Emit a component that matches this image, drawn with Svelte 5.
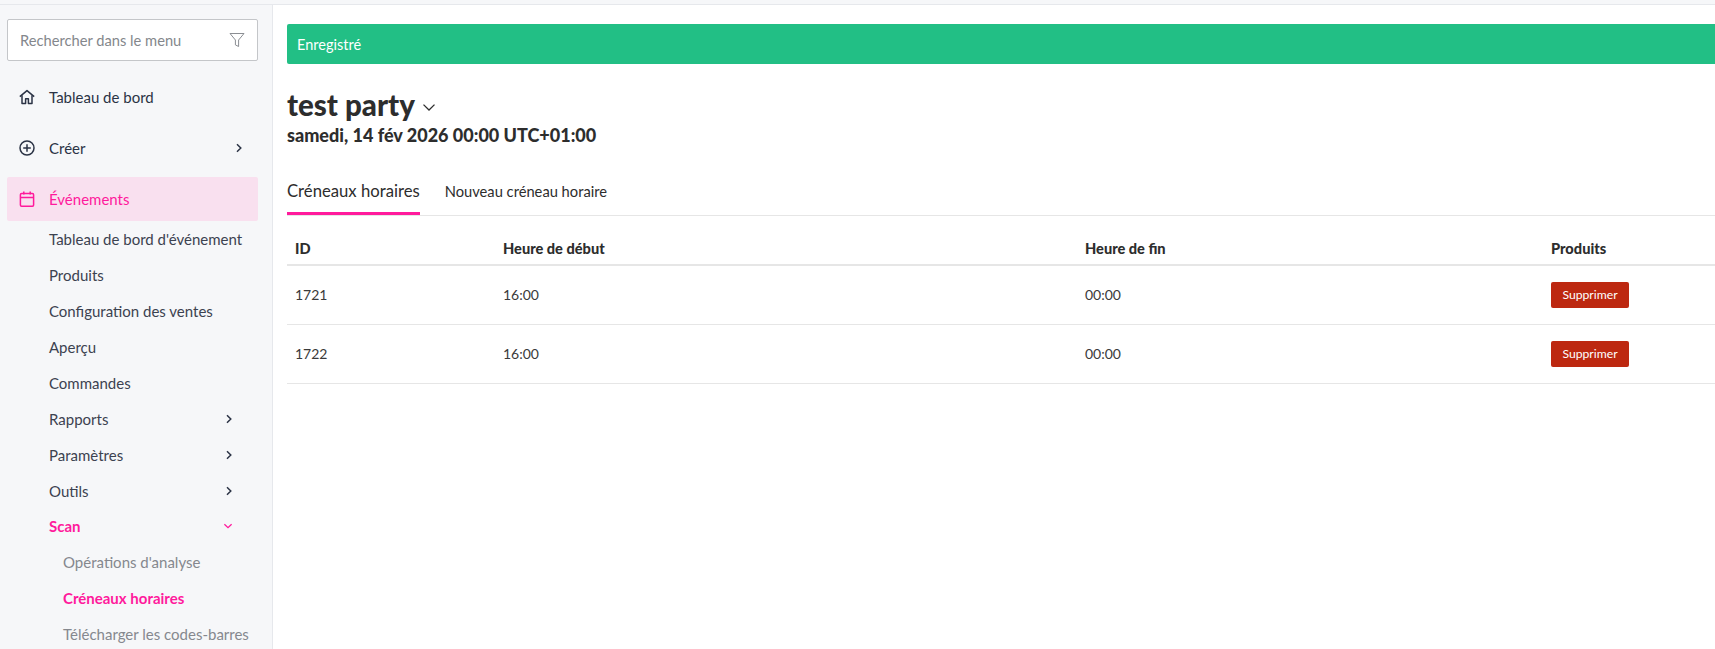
<script>
	const events = [
		{ label: "Tableau de bord d'événement" },
		{ label: 'Produits' },
		{ label: 'Configuration des ventes' },
		{ label: 'Aperçu' },
		{ label: 'Commandes' },
		{ label: 'Rapports', more: true },
		{ label: 'Paramètres', more: true },
		{ label: 'Outils', more: true }
	];
	const scans = [
		{ label: "Opérations d'analyse" },
		{ label: 'Créneaux horaires', active: true },
		{ label: 'Télécharger les codes-barres' }
	];
	const slots = [
		{ id: 1721, start: '16:00', end: '00:00' },
		{ id: 1722, start: '16:00', end: '00:00' }
	];
</script>

<div class="page">
	<div class="topbar"></div>
	<div class="layout">
		<aside class="sidebar">
			<div class="search">
				<span class="placeholder">Rechercher dans le menu</span>
				<svg width="16" height="16" viewBox="0 0 16 16" fill="none" stroke="#8b8e93" stroke-width="1">
					<path d="M1 1.5h14L9.6 8v6.5l-3.2-1.6V8z" stroke-linejoin="round" />
				</svg>
			</div>

			<nav class="nav">
				<a class="top first">
					<svg class="icon" viewBox="0 0 16 16" fill="none" stroke="#2b3345" stroke-width="1.5" stroke-linejoin="round">
						<path d="M.8 7.6 8 1.6l7.2 6" />
						<path d="M3 6.2v8.2h3.6V9.8h2.8v4.6H13V6.2" />
					</svg>
					<span>Tableau de bord</span>
				</a>
				<a class="top">
					<svg class="icon" viewBox="0 0 16 16" fill="none" stroke="#2b3345" stroke-width="1.5">
						<circle cx="8" cy="8" r="7" />
						<path d="M8 4.2v7.6M4.2 8h7.6" />
					</svg>
					<span>Créer</span>
					<svg class="chev create" viewBox="0 0 8 10" fill="none" stroke="#2b3345" stroke-width="1.5"><path d="M2 1.2 5.8 5 2 8.8" /></svg>
				</a>
				<a class="top current">
					<svg class="icon" viewBox="0 0 16 16" fill="none" stroke="#ff1a9c" stroke-width="1.5">
						<rect x="1.4" y="2.6" width="13.2" height="12.6" rx="1.2" />
						<path d="M1.4 6.4h13.2M4.8.4v3M11.2.4v3" />
					</svg>
					<span>Événements</span>
				</a>

				<div class="sub">
					{#each events as item}
						<a class="sub-item">
							<span>{item.label}</span>
							{#if item.more}
								<svg class="chev" viewBox="0 0 8 10" fill="none" stroke="#2b3345" stroke-width="1.5"><path d="M2 1.2 5.8 5 2 8.8" /></svg>
							{/if}
						</a>
					{/each}
					<a class="sub-item open">
						<span>Scan</span>
						<svg class="chev-down" viewBox="0 0 10 8" fill="none" stroke="#ff1a9c" stroke-width="1.3"><path d="M1.4 2.2 5 5.6l3.6-3.4" /></svg>
					</a>
					{#each scans as item}
						<a class="scan-item" class:active={item.active}>{item.label}</a>
					{/each}
				</div>
			</nav>
		</aside>

		<main class="main">
			<div class="alert">Enregistré</div>

			<div class="title">
				<h1>test party</h1>
				<svg width="14" height="9" viewBox="0 0 14 9" fill="none" stroke="#2d2d2d" stroke-width="1.3"><path d="M1.5 1.6 7 7l5.5-5.4" /></svg>
			</div>
			<h2>samedi, 14 fév 2026 00:00 UTC+01:00</h2>

			<div class="tabs">
				<a class="tab selected">Créneaux horaires</a>
				<a class="tab">Nouveau créneau horaire</a>
			</div>

			<table>
				<colgroup>
					<col style="width: 208px" />
					<col style="width: 582px" />
					<col style="width: 466px" />
					<col />
				</colgroup>
				<thead>
					<tr>
						<th>ID</th>
						<th>Heure de début</th>
						<th>Heure de fin</th>
						<th>Produits</th>
					</tr>
				</thead>
				<tbody>
					{#each slots as slot}
						<tr>
							<td>{slot.id}</td>
							<td>{slot.start}</td>
							<td>{slot.end}</td>
							<td><button>Supprimer</button></td>
						</tr>
					{/each}
				</tbody>
			</table>
		</main>
	</div>
</div>

<style>
	:global(body) {
		margin: 0;
		overflow: hidden;
		background: #fff;
	}
	.page {
		height: 649px;
		width: 1715px;
		overflow: hidden;
		font-family: Lato, 'Noto Sans', sans-serif;
		color: #2d2d2d;
		font-size: 14px;
	}
	.topbar {
		height: 4px;
		background: #f6f7f9;
		border-bottom: 1px solid #e6e8ec;
	}
	.layout {
		display: flex;
		height: 644px;
	}
	.sidebar {
		width: 272px;
		flex: none;
		background: #f6f7f9;
		border-right: 1px solid #e6e8ec;
		padding-top: 14px;
		overflow: hidden;
	}
	.search {
		display: flex;
		align-items: center;
		justify-content: space-between;
		box-sizing: border-box;
		width: 251px;
		height: 42px;
		margin-left: 7px;
		padding: 0 12px 0 12px;
		background: #fff;
		border: 1px solid #c4c6c9;
		border-radius: 2px;
	}
	.placeholder {
		font-size: 14.7px;
		color: #84878c;
	}
	.nav {
		margin-top: 14px;
	}
	.top {
		display: flex;
		align-items: center;
		box-sizing: border-box;
		width: 251px;
		height: 44px;
		margin: 0 0 7px 7px;
		padding-left: 12px;
		border-radius: 2px;
		color: #2b3345;
		font-size: 15px;
	}
	.top span {
		margin-left: 14px;
	}
	.top.current {
		background: #f9e0ef;
		color: #ff1a9c;
		margin-bottom: 0;
	}
	.icon {
		width: 16px;
		height: 16px;
		flex: none;
	}
	.chev {
		width: 8px;
		height: 10px;
		margin-left: auto;
		margin-right: 15px;
	}
	.sub {
		padding-left: 49px;
		padding-right: 36px;
	}
	.sub-item {
		display: flex;
		align-items: center;
		height: 36px;
		padding-bottom: 1px;
		box-sizing: border-box;
		color: #3c4250;
		font-size: 15px;
		white-space: nowrap;
	}
	.sub-item .chev {
		margin-right: 3px;
	}
	.sub-item.open {
		color: #ff1a9c;
		font-weight: 700;
		padding-bottom: 2px;
	}
	.chev-down {
		width: 10px;
		height: 8px;
		margin-left: auto;
		margin-right: 3px;
	}
	.scan-item {
		display: flex;
		align-items: center;
		height: 36px;
		padding-left: 14px;
		padding-bottom: 2px;
		box-sizing: border-box;
		margin-right: -30px;
		color: #85888e;
		font-size: 15px;
		white-space: nowrap;
	}
	.scan-item.active {
		color: #ff1a9c;
		font-weight: 700;
	}
	.main {
		flex: 1;
		min-width: 0;
		padding: 19px 0 0 14px;
		overflow: hidden;
	}
	.alert {
		display: flex;
		align-items: center;
		width: 1500px;
		height: 40px;
		padding-left: 10px;
		box-sizing: border-box;
		background: #22bf85;
		border-radius: 2px 0 0 2px;
		color: #fff;
		font-size: 14.5px;
	}
	.title {
		display: flex;
		align-items: center;
		gap: 7px;
		margin-top: 23px;
		height: 35px;
	}
	.title svg {
		margin-top: 6px;
	}
	h1 {
		margin: 0;
		font-size: 29.5px;
		font-weight: 900;
		line-height: 35px;
		color: #2d2d2d;
	}
	h2 {
		margin: 0;
		font-size: 18px;
		font-weight: 900;
		line-height: 26px;
		color: #2d2d2d;
	}
	.tabs {
		display: flex;
		gap: 25px;
		width: 1500px;
		height: 48px;
		margin-top: 19px;
		border-bottom: 1px solid #e6e6e6;
	}
	.tab {
		display: flex;
		align-items: center;
		height: 48px;
		box-sizing: border-box;
		font-size: 14.7px;
		color: #2d2d2d;
	}
	.tab.selected {
		padding-top: 3px;
		font-size: 16.7px;
		border-bottom: 3px solid #ff1a9c;
	}
	table {
		table-layout: fixed;
		width: 1500px;
		border-collapse: collapse;
		margin-top: 16px;
	}
	th {
		height: 32px;
		padding: 0 8px;
		text-align: left;
		font-size: 14.6px;
		font-weight: 900;
		color: #2d2d2d;
		border-bottom: 2px solid #e6e6e6;
	}
	td {
		height: 59px;
		padding: 0 8px;
		box-sizing: border-box;
		font-size: 14px;
		color: #3a3a3a;
		border-bottom: 1px solid #e6e6e6;
	}
	button {
		display: block;
		width: 78px;
		height: 26px;
		padding: 0;
		background: #bd2810;
		border: none;
		border-radius: 2px;
		color: #fff;
		font-family: inherit;
		font-size: 12.2px;
	}
</style>
